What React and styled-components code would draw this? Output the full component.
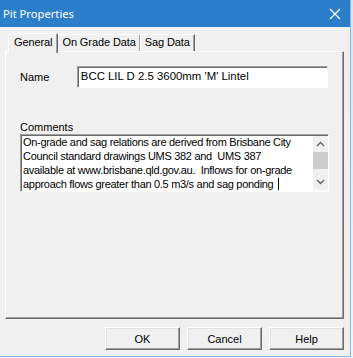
import styled, { createGlobalStyle } from "styled-components";

const Global = createGlobalStyle`
  html, body { margin: 0; padding: 0; background: #e8eef4; }
  body { font-family: "Liberation Sans", Arial, sans-serif; font-size: 11px; color: #000; }
`;

const Desk = styled.div`
  width: 353px;
  height: 358px;
  background: linear-gradient(#d9e4ee, #f4f4f4);
  overflow: hidden;
`;

const Window = styled.div`
  width: 350px;
  height: 356px;
  background: #f0f0f0;
  border-right: 1px solid #86b8e8;
  border-bottom: 1px solid #86b8e8;
  display: flex;
  flex-direction: column;
`;

const TitleBar = styled.div`
  height: 27px;
  background: #2b7fca;
  color: #fff;
  display: flex;
  align-items: center;
  justify-content: space-between;
  padding: 0 9px 0 3px;
  font-family: "Noto Sans", "Liberation Sans", sans-serif;
  font-size: 11.2px;
  flex-shrink: 0;
`;

const Close = styled.svg`
  width: 12px;
  height: 12px;
`;

const Body = styled.div`
  flex: 1;
  padding: 4px 6px 0 5px;
  display: flex;
  flex-direction: column;
`;

const Tabs = styled.div`
  display: flex;
  align-items: flex-end;
  height: 20px;
  padding-left: 3px;
  position: relative;
  z-index: 1;
`;

const Tab = styled.div`
  height: ${(p) => (p.$active ? "20px" : "17px")};
  box-sizing: border-box;
  padding: ${(p) => (p.$active ? "2px 5px 0 5px" : "1px 4px 0 4px")};
  margin-left: ${(p) => (p.$active ? "0" : "-1px")};
  border-top: 1px solid #fff;
  border-left: 1px solid #fff;
  border-right: 1px solid #696969;
  box-shadow: inset -1px 0 #a0a0a0;
  background: #f0f0f0;
  font-size: 11px;
  letter-spacing: -0.1px;
  white-space: nowrap;
  margin-bottom: ${(p) => (p.$active ? "-2px" : "0")};
  position: relative;
  z-index: ${(p) => (p.$active ? 2 : 1)};
`;

const Panel = styled.div`
  height: 268px;
  box-sizing: border-box;
  border-top: 1px solid #fff;
  border-left: 1px solid #fff;
  border-right: 1px solid #696969;
  border-bottom: 1px solid #696969;
  box-shadow: inset -1px -1px #a0a0a0;
  padding: 14px 15px 0 14px;
  display: flex;
  flex-direction: column;
`;

const Row = styled.div`
  display: flex;
  align-items: center;
`;

const Label = styled.div`
  width: 57px;
  font-size: 11px;
`;

const Sunken = styled.div`
  box-sizing: border-box;
  background: #fff;
  border-top: 1px solid #a0a0a0;
  border-left: 1px solid #a0a0a0;
  border-right: 1px solid #fff;
  border-bottom: 1px solid #fff;
  box-shadow: inset 1px 1px #696969;
`;

const NameBox = styled(Sunken)`
  width: 252px;
  height: 22px;
  padding: 3px 0 0 3px;
  font-size: 11.4px;
`;

const CommentsLabel = styled.div`
  margin-top: 33px;
  font-size: 11px;
  height: 13px;
`;

const CommentBox = styled(Sunken)`
  width: 309px;
  height: 58px;
  display: flex;
  padding: 0 0 0 2px;
`;

const CommentText = styled.div`
  flex: 1;
  font-size: 11px;
  letter-spacing: -0.3px;
  line-height: 14px;
  white-space: pre;
  overflow: hidden;
`;

const Caret = styled.span`
  display: inline-block;
  width: 1px;
  height: 12px;
  background: #000;
  vertical-align: -2px;
  margin-left: 2px;
`;

const ScrollBar = styled.div`
  width: 15px;
  background: #f0f0f0;
  display: flex;
  flex-direction: column;
  align-items: center;
  margin: 1px 0 1px;
`;

const Arrow = styled.svg`
  width: 15px;
  height: 16px;
`;

const Thumb = styled.div`
  width: 15px;
  height: 17px;
  background: #cdcdcd;
`;

const Track = styled.div`
  flex: 1;
`;

const Buttons = styled.div`
  display: flex;
  justify-content: flex-end;
  gap: 7px;
  padding-top: 8px;
`;

const Button = styled.div`
  width: 75px;
  height: 23px;
  box-sizing: border-box;
  display: flex;
  align-items: center;
  justify-content: center;
  font-size: 11px;
  background: #f0f0f0;
  border-top: 1px solid #fff;
  border-left: 1px solid #fff;
  border-right: 1px solid #696969;
  border-bottom: 1px solid #696969;
  box-shadow: inset -1px -1px #a0a0a0, inset 1px 1px #e3e3e3;
`;

const comment =
  "On-grade and sag relations are derived from Brisbane City\nCouncil standard drawings UMS 382 and  UMS 387\navailable at www.brisbane.qld.gov.au.  Inflows for on-grade\napproach flows greater than 0.5 m3/s and sag ponding ";

export default function App() {
  return (
    <Desk>
      <Global />
      <Window>
        <TitleBar>
          <span>Pit Properties</span>
          <Close viewBox="0 0 12 12">
            <path d="M1 1L11 11M11 1L1 11" stroke="#fff" strokeWidth="1.2" />
          </Close>
        </TitleBar>
        <Body>
          <Tabs>
            <Tab $active>General</Tab>
            <Tab>On Grade Data</Tab>
            <Tab>Sag Data</Tab>
          </Tabs>
          <Panel>
            <Row>
              <Label>Name</Label>
              <NameBox>BCC LIL D 2.5 3600mm 'M' Lintel</NameBox>
            </Row>
            <CommentsLabel>Comments</CommentsLabel>
            <CommentBox>
              <CommentText>
                {comment}
                <Caret />
              </CommentText>
              <ScrollBar>
                <Arrow viewBox="0 0 15 16">
                  <path d="M4 10L7.5 6.5L11 10" stroke="#606060" strokeWidth="1.3" fill="none" />
                </Arrow>
                <Thumb />
                <Track />
                <Arrow viewBox="0 0 15 16">
                  <path d="M4 6L7.5 9.5L11 6" stroke="#606060" strokeWidth="1.3" fill="none" />
                </Arrow>
              </ScrollBar>
            </CommentBox>
          </Panel>
          <Buttons>
            <Button>OK</Button>
            <Button>Cancel</Button>
            <Button>Help</Button>
          </Buttons>
        </Body>
      </Window>
    </Desk>
  );
}
